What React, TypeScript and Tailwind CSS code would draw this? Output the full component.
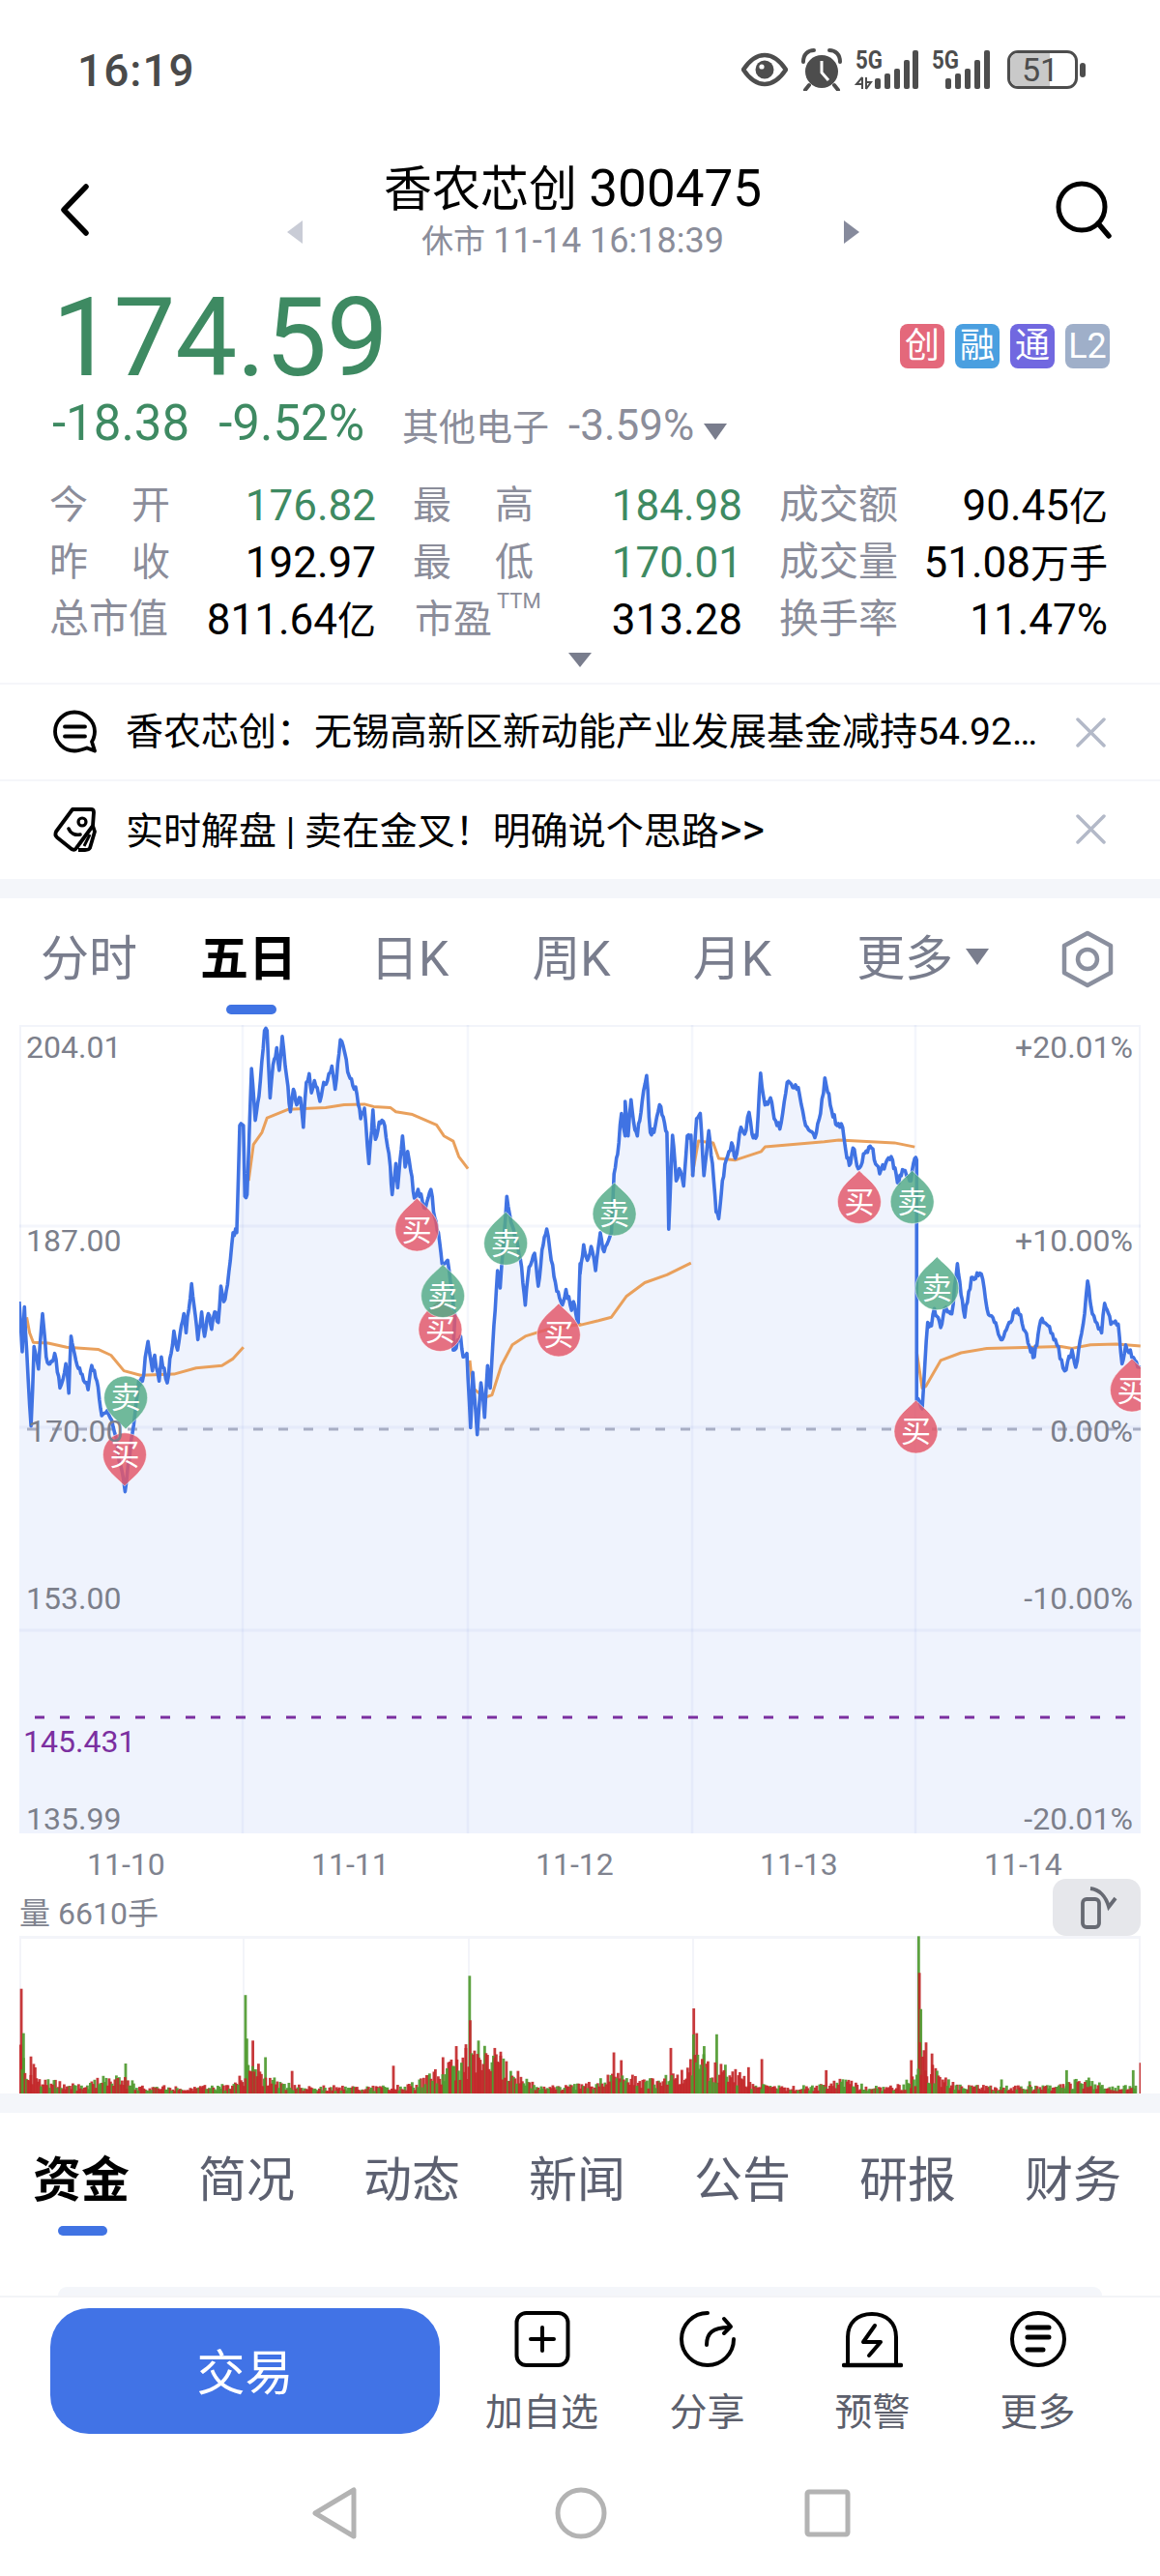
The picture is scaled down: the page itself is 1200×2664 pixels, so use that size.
import React from "react";

const F = { fontFamily: 'Roboto, "Noto Sans CJK SC", sans-serif' } as const;
const ff = "font-['Roboto','Noto_Sans_CJK_SC',sans-serif]";

type P = [number, number];
const z3 = (p: P): P => [p[0] / 2.613, 1040 + p[1] / 2.8];
const z4 = (p: P): P => [600 + p[0] / 2.613, 1040 + p[1] / 2.8];

const blueA: P[] = [[52,860],[60,1005],[66,875],[72,1000],[84,1220],[92,990],[104,1055],[115,895],[125,1020],[135,1040],[148,1010],[162,1110],[178,1040],[186,1125],[192,960],[205,1030],[222,1070],[238,1115],[248,1045],[262,1090],[275,1190],[290,1175],[310,1240],[338,1410],[358,1240],[375,1090],[385,1090],[400,975],[412,1060],[418,1015],[430,1090],[436,1020],[452,1095],[470,945],[480,1000],[497,895],[503,950],[518,808],[535,970],[545,890],[553,960],[563,895],[572,940],[580,890],[590,920],[597,815],[605,860],[615,810],[630,660],[640,660],[648,350],[658,350],[662,555],[668,550],[680,185],[690,335],[700,265],[715,75],[722,75],[730,270],[738,175],[748,125],[755,190],[763,92],[775,210],[785,310],[793,245],[802,290],[812,270],[820,355],[828,225],[836,200],[842,255],[850,220],[865,280],[875,225],[885,220],[897,178],[906,245],[920,102],[932,140],[940,195],[950,215],[965,260],[975,330],[985,300],[997,460],[1008,305],[1015,390],[1025,340],[1040,350],[1055,470],[1060,550],[1070,460],[1075,530],[1088,380],[1095,470],[1102,425],[1110,480],[1120,560],[1130,535],[1150,590],[1165,535],[1172,600],[1185,660],[1195,750],[1210,740],[1230,900],[1225,1000],[1245,960],[1252,1020],[1262,1010],[1272,1225],[1278,1065],[1290,1245],[1300,1095],[1310,1195],[1318,1045],[1325,1110],[1335,930],[1345,770],[1352,820],[1370,555],[1385,640],[1400,700],[1410,760],[1420,870],[1430,760],[1445,720],[1455,815],[1465,710],[1478,650],[1490,740],[1505,830],[1520,870],[1530,825],[1545,885],[1550,860],[1563,920],[1568,750]];
const blueB: P[] = [[0,780],[10,695],[20,740],[30,700],[42,770],[55,660],[65,715],[85,660],[92,490],[105,400],[112,315],[122,380],[122,280],[130,380],[138,275],[145,340],[155,380],[168,280],[180,205],[190,370],[200,370],[215,290],[225,325],[235,370],[240,650],[250,378],[260,510],[268,475],[280,525],[290,380],[300,378],[305,495],[315,330],[325,315],[335,495],[348,365],[358,460],[368,600],[375,620],[385,510],[395,450],[410,400],[420,445],[435,355],[445,375],[457,312],[465,375],[478,380],[488,198],[500,290],[515,270],[525,330],[540,360],[560,225],[575,240],[590,240],[610,350],[635,385],[650,315],[662,212],[680,305],[695,350],[710,355],[718,420],[728,465],[738,415],[752,475],[770,430],[788,415],[810,490],[830,450],[845,450],[858,515],[875,480],[895,510],[905,445],[910,450],[910,1145],[918,1150],[925,1170],[932,1045],[940,920],[950,930],[958,880],[975,935],[985,880],[1005,895],[1020,750],[1030,840],[1040,905],[1058,790],[1085,780],[1100,880],[1120,920],[1138,970],[1160,920],[1183,880],[1215,990],[1228,1020],[1245,915],[1265,930],[1285,970],[1310,1060],[1330,1000],[1340,1050],[1360,925],[1372,800],[1385,895],[1410,950],[1418,865],[1435,925],[1455,925],[1465,1040],[1475,985],[1500,1030],[1515,1050]];

const rnd = (i: number) => {
  const v = Math.sin(i * 12.9898 + 4.1) * 43758.5453;
  return v - Math.floor(v);
};

function jitter(pts: P[]): P[] {
  const out: P[] = [];
  pts.forEach((p, i) => {
    out.push(p);
    const n = pts[i + 1];
    if (!n) return;
    const dx = n[0] - p[0];
    const steps = Math.floor(dx / 1.6);
    for (let k = 1; k <= steps; k++) {
      const t = k / (steps + 1);
      out.push([p[0] + dx * t, p[1] + (n[1] - p[1]) * t + (rnd(i * 31 + k) - 0.5) * 8]);
    }
  });
  return out;
}

const blue: P[] = jitter([...blueA.map(z3), ...blueB.map(z4)]);
const toPath = (pts: P[]) => pts.map((p, i) => `${i ? "L" : "M"}${p[0].toFixed(1)} ${p[1].toFixed(1)}`).join("");
const fillPath = toPath(blue) + "L1180 1897L20 1897Z";

const orange: string[] = [
  toPath([[72,905],[80,950],[90,978],[130,980],[180,992],[265,998],[300,1015],[335,1060],[380,1073],[470,1070],[530,1052],[600,1045],[630,1025],[658,992]].map((p) => z3(p as P))),
  toPath([[672,510],[685,405],[708,370],[722,328],[780,303],[880,298],[930,290],[985,288],[1010,295],[1055,298],[1070,310],[1115,318],[1180,348],[1200,380],[1225,395],[1240,440],[1265,475]].map((p) => z3(p as P))),
  toPath([...[[1270,1030],[1278,1110],[1310,1138],[1330,1130],[1355,1045],[1385,985],[1420,960],[1480,940],[1568,925]].map((p) => z3(p as P)), ...[[0,928],[50,915],[85,905],[125,845],[175,805],[235,782],[300,748]].map((p) => z4(p as P))]),
  toPath([[303,495],[320,395],[360,400],[375,445],[420,450],[490,425],[500,412],[660,397],[700,392],[850,400],[905,412]].map((p) => z4(p as P))),
  toPath([[910,1005],[925,1110],[935,1105],[975,1030],[1030,1008],[1100,995],[1300,990],[1330,995],[1380,985],[1450,983],[1515,988]].map((p) => z4(p as P))),
];

type M = { x: number; y: number; up: boolean; buy: boolean };
const mk = (f: (p: P) => P, zx: number, top: number, up: boolean, buy: boolean): M => {
  const [x, y] = f([zx, top]);
  return { x, y, up, buy };
};
const markers: M[] = [
  mk(z3, 337, 1240, false, true),
  mk(z3, 340, 1075, false, false),
  mk(z3, 1127, 560, true, true),
  mk(z3, 1190, 850, true, true),
  mk(z3, 1197, 752, true, false),
  mk(z3, 1367, 600, true, false),
  mk(z3, 1510, 865, true, true),
  mk(z4, 93, 515, true, false),
  mk(z4, 755, 480, true, true),
  mk(z4, 898, 480, true, false),
  mk(z4, 965, 730, true, false),
  mk(z4, 908, 1145, true, true),
  mk(z4, 1492, 1025, true, true),
];

function Marker({ m }: { m: M }) {
  const h = 55;
  const r = 22.5;
  const c = m.buy ? "#e2586a" : "#55ab88";
  const d = m.up
    ? `M${m.x} ${m.y}C${m.x + 7} ${m.y + 8} ${m.x + r} ${m.y + 17} ${m.x + r} ${m.y + h - r}A${r} ${r} 0 1 1 ${m.x - r} ${m.y + h - r}C${m.x - r} ${m.y + 17} ${m.x - 7} ${m.y + 8} ${m.x} ${m.y}Z`
    : `M${m.x} ${m.y + h}C${m.x + 7} ${m.y + h - 8} ${m.x + r} ${m.y + h - 17} ${m.x + r} ${m.y + r}A${r} ${r} 0 1 0 ${m.x - r} ${m.y + r}C${m.x - r} ${m.y + h - 17} ${m.x - 7} ${m.y + h - 8} ${m.x} ${m.y + h}Z`;
  const ty = m.up ? m.y + h - r + 11 : m.y + r + 11;
  return (
    <g>
      <path d={d} fill={c} fillOpacity={0.84} stroke="#ffffff" strokeOpacity={0.5} strokeWidth={1} />
      <text x={m.x} y={ty} textAnchor="middle" fontSize={31} fill="#ffffff" style={F}>
        {m.buy ? "买" : "卖"}
      </text>
    </g>
  );
}

const spikes: [number, number, boolean][] = [[27,1195,true],[30,1315,false],[40,1378,true],[168,1397,false],[330,1212,false],[340,1335,true],[357,1380,false],[393,1417,true],[530,1403,true],[597,1380,true],[615,1350,true],[633,1160,false],[628,1345,true],[645,1335,false],[667,1355,true],[675,1365,true],[828,1367,true],[838,1388,true],[905,1355,true],[936,1248,true],[940,1315,true],[950,1350,false],[967,1318,false],[1010,1407,true],[1028,1385,true],[1115,1415,true],[1240,1053,false],[1241,1152,true],[1243,1250,false],[1250,1340,true],[1258,1370,true],[1230,1388,true],[1352,1440,false],[1390,1445,false],[1440,1415,false],[1470,1435,false],[1530,1415,false],[1540,1395,true]];

function envelope(x: number) {
  let v = 6;
  for (const d of [20, 253, 484, 716, 949]) {
    if (x >= d) v += 36 * Math.exp(-(x - d) / 16);
    else v += 16 * Math.exp((x - d) / 9);
  }
  const b = (c: number, w: number, a: number) => a * Math.exp(-((x - c) * (x - c)) / (2 * w * w));
  return v + b(115, 14, 10) + b(470, 22, 18) + b(515, 18, 16) + b(640, 22, 9) + b(700, 16, 10) + b(752, 14, 12) + b(870, 12, 5) + b(1120, 12, 6);
}

const volBars: { x: number; h: number; red: boolean }[] = [];
for (let i = 0; i < 770; i++) {
  const x = 20 + i * 1.5;
  const r = rnd(i + 500);
  volBars.push({ x, h: Math.max(2, envelope(x) * (0.4 + 1.05 * r)), red: rnd(i + 900) > 0.42 });
}
spikes.forEach(([z, y, red]) => volBars.push({ x: z / 1.3067, h: (1478 - y) / 2.613, red }));
volBars.sort((a, b) => b.h - a.h);

const vLines = [251, 484, 716, 947];

function Chart() {
  return (
    <div className={`relative w-[1160px] h-[836px] border-2 border-[#f2f4fa] ${ff}`}>
      <svg className="absolute left-[-2px] top-[-2px]" width={1160} height={836} viewBox="20 1061 1160 836">
        <path d={fillPath} fill="#eff3fd" />
        {vLines.map((x) => (
          <line key={x} x1={x} x2={x} y1={1061} y2={1897} stroke="#5f7fd0" strokeOpacity={0.07} strokeWidth={2.5} />
        ))}
        {[1269, 1477, 1687].map((y) => (
          <line key={y} x1={20} x2={1180} y1={y} y2={y} stroke="#5f7fd0" strokeOpacity={0.07} strokeWidth={3} />
        ))}
        <line x1={28} x2={1180} y1={1479} y2={1479} stroke="#a8aec4" strokeWidth={3} strokeDasharray="10 16" />
        <line x1={36} x2={1166} y1={1777} y2={1777} stroke="#7b2fa0" strokeWidth={3} strokeDasharray="10 16" />
        {orange.map((d, i) => (
          <path key={i} d={d} fill="none" stroke="#e9a05c" strokeWidth={3} strokeLinejoin="round" />
        ))}
        <path d={toPath(blue)} fill="none" stroke="#4073e3" strokeWidth={3.6} strokeLinejoin="round" />
        {markers.map((m, i) => (
          <Marker key={i} m={m} />
        ))}
      </svg>
      <Lbl cls="left-[5px] top-[3px]" t="204.01" />
      <Lbl cls="left-[5px] top-[203px]" t="187.00" />
      <Lbl cls="left-[7px] top-[400px]" t="170.00" />
      <Lbl cls="left-[5px] top-[573px]" t="153.00" />
      <span className="absolute left-[2px] top-[721px] text-[32px] leading-[36px] text-[#7b2fa0]">145.431</span>
      <Lbl cls="left-[5px] top-[801px]" t="135.99" />
      <Lbl cls="right-[6px] top-[3px]" t="+20.01%" />
      <Lbl cls="right-[6px] top-[203px]" t="+10.00%" />
      <Lbl cls="right-[6px] top-[400px]" t="0.00%" />
      <Lbl cls="right-[6px] top-[573px]" t="-10.00%" />
      <Lbl cls="right-[6px] top-[801px]" t="-20.01%" />
    </div>
  );
}

function Lbl({ cls, t }: { cls: string; t: string }) {
  return <span className={`absolute ${cls} text-[32px] leading-[36px] text-[#7c7f8b]`}>{t}</span>;
}

function Volume() {
  return (
    <svg className="block" width={1160} height={163} viewBox="20 2003 1160 163">
      <rect x={20} y={2003} width={1160} height={3} fill="#f3f4f9" />
      <rect x={20} y={2003} width={2} height={163} fill="#f3f4f9" />
      <rect x={1178} y={2003} width={2} height={163} fill="#f3f4f9" />
      {vLines.map((x) => (
        <rect key={x} x={x} y={2003} width={2} height={163} fill="#f3f4f9" />
      ))}
      {volBars.map((b, i) => (
        <rect key={i} x={b.x} y={2166 - b.h} width={2.8} height={b.h} fill={b.red ? "#c2282a" : "#4f9a30"} fillOpacity={0.92} />
      ))}
    </svg>
  );
}

function Label2({ a, b }: { a: string; b: string }) {
  return (
    <span className="-ml-[3px] w-[125px] flex justify-between text-[#8b8d9a]">
      <span>{a}</span>
      <span>{b}</span>
    </span>
  );
}

function Label3({ t }: { t: string }) {
  return <span className="-ml-[3px] text-[41px] text-[#8b8d9a]">{t}</span>;
}

function StatCell({ children, value, unit, color }: { children: React.ReactNode; value: string; unit?: string; color: string }) {
  return (
    <div className="flex items-center justify-between h-[59px]">
      {children}
      <span className={`${color} whitespace-nowrap`}>
        <span className="text-[44px]">{value}</span>
        {unit}
      </span>
    </div>
  );
}

function Tag({ t, c }: { t: string; c: string }) {
  return (
    <span className={`w-[46px] h-[46px] rounded-[8px] flex items-center justify-center text-white text-[36px] leading-none ${c}`}>{t}</span>
  );
}

function Close() {
  return (
    <svg width={33} height={31} viewBox="0 0 33 31" className="shrink-0">
      <path d="M3 2L30 29M30 2L3 29" stroke="#b3b9c8" strokeWidth={3.5} strokeLinecap="round" />
    </svg>
  );
}

function StatusIcons() {
  return (
    <div className="flex items-center">
      <svg width={48} height={42} viewBox="0 0 48 42">
        <path d="M2 21C10 9 17 6 24 6S38 9 46 21C38 33 31 36 24 36S10 33 2 21Z" fill="none" stroke="#4d4d4d" strokeWidth={4.5} strokeLinejoin="round" />
        <circle cx={24} cy={21} r={9.5} fill="#4d4d4d" />
        <circle cx={21} cy={18} r={2.6} fill="#ffffff" />
      </svg>
      <svg width={42} height={44} viewBox="0 0 42 44" className="ml-[14px]">
        <circle cx={21} cy={24} r={17} fill="#4d4d4d" />
        <path d="M21 13V25L28 33" fill="none" stroke="#ffffff" strokeWidth={3} />
        <path d="M2 14C2 6 7 2 13 2M40 14C40 6 35 2 29 2" fill="none" stroke="#4d4d4d" strokeWidth={4} strokeLinecap="round" />
        <path d="M8 38L4 43M34 38L38 43" stroke="#4d4d4d" strokeWidth={4} strokeLinecap="round" />
      </svg>
      <svg width={142} height={42} viewBox="885 52 142 42" className="ml-[14px] overflow-visible">
        <text x={885} y={72} fontSize={26} fontWeight={700} fill="#4d4d4d" textLength={28} lengthAdjust="spacingAndGlyphs" style={F}>5G</text>
        <path d="M892 81V93M892 81L886 88H892M896 93V81M896 93L901 86H896" fill="none" stroke="#4d4d4d" strokeWidth={2} />
        {[[905,82],[915,77],[925,72],[935,63],[944,53]].map(([x, y]) => (
          <rect key={x} x={x} y={y} width={6} height={93 - y} rx={2} fill="#4d4d4d" />
        ))}
        <text x={964} y={72} fontSize={26} fontWeight={700} fill="#4d4d4d" textLength={28} lengthAdjust="spacingAndGlyphs" style={F}>5G</text>
        {[[978,82],[988,77],[998,72],[1008,63],[1018,53]].map(([x, y]) => (
          <rect key={x} x={x} y={y} width={6} height={93 - y} rx={2} fill="#4d4d4d" />
        ))}
      </svg>
      <div className="ml-[15px] relative w-[73px] h-[40px] rounded-[11px] border-[3px] border-[#4d4d4d] overflow-hidden flex items-center justify-center">
        <div className="absolute left-0 top-0 bottom-0 w-[41px] bg-[#c9c9c9]" />
        <span className="relative text-[34px] leading-none text-[#4d4d4d] -ml-[5px]">51</span>
      </div>
      <div className="ml-[2px] w-[6px] h-[15px] rounded-[3px] bg-[#4d4d4d]" />
    </div>
  );
}

function Act({ t, icon }: { t: string; icon: React.ReactNode }) {
  return (
    <div className="w-[171px] flex flex-col items-center">
      <div className="mt-[1px] h-[62px] flex items-center justify-center">{icon}</div>
      <span className="mt-[23px] text-[39px] leading-[44px] text-[#5c5f6c]">{t}</span>
    </div>
  );
}

export default function App() {
  return (
    <div className={`w-[1200px] h-[2664px] bg-white overflow-hidden ${ff}`}>
      <div className="h-[144px] flex items-center justify-between pl-[80px] pr-[77px]">
        <span className="pt-[2px] text-[46px] leading-none font-medium tracking-[1px] text-[#4a4a4a]">16:19</span>
        <StatusIcons />
      </div>

      <div className="h-[146px] flex items-start justify-between pl-[62px] pr-[49px]">
        <svg width={30} height={54} viewBox="0 0 30 54" className="mt-[46px]">
          <path d="M27 3L4 27L27 51" fill="none" stroke="#000" strokeWidth={5.5} strokeLinecap="round" strokeLinejoin="round" />
        </svg>
        <div className="flex items-center ml-[2px]">
          <svg width={16} height={24} viewBox="0 0 16 24" className="mt-[66px]"><path d="M16 0V24L0 12Z" fill="#c9ccd6" /></svg>
          <div className="w-[560px] flex flex-col items-center">
            <span className="mt-[24px] text-[50px] leading-[54px] text-black whitespace-nowrap">香农芯创 <span className="text-[53px]">300475</span></span>
            <span className="mt-[7px] text-[33px] leading-[38px] text-[#8b8d9a] whitespace-nowrap">休市 <span className="text-[36px]">11-14 16:18:39</span></span>
          </div>
          <svg width={16} height={24} viewBox="0 0 16 24" className="mt-[66px]"><path d="M0 0V24L16 12Z" fill="#868a9c" /></svg>
        </div>
        <svg width={60} height={60} viewBox="0 0 60 60" className="mt-[43px]">
          <circle cx={28} cy={27} r={24} fill="none" stroke="#000" strokeWidth={5} />
          <path d="M45 44L56 57" stroke="#000" strokeWidth={5.5} strokeLinecap="round" />
        </svg>
      </div>

      <div className="h-[203px] flex items-start justify-between pl-[54px] pr-[52px]">
        <div className="flex flex-col">
          <span className="mt-[3px] text-[114px] leading-[112px] text-[#3e8a62] tracking-[-0.5px]">174.59</span>
          <div className="mt-[8px] flex items-baseline leading-[50px] whitespace-nowrap">
            <span className="text-[51px] text-[#3e8a62]">-18.38</span>
            <span className="ml-[30px] text-[51px] text-[#3e8a62]">-9.52%</span>
            <span className="ml-[39px] text-[38px] text-[#8b8d9a]">其他电子</span>
            <span className="ml-[20px] text-[44px] text-[#8b8d9a]">-3.59%</span>
            <svg width={24} height={17} viewBox="0 0 24 17" className="ml-[10px]"><path d="M0 0H24L12 17Z" fill="#797d8d" /></svg>
          </div>
        </div>
        <div className="mt-[45px] flex gap-[11px]">
          <Tag t="创" c="bg-[#e4687b]" />
          <Tag t="融" c="bg-[#4a9fe0]" />
          <Tag t="通" c="bg-[#7168e0]" />
          <Tag t="L2" c="bg-[#9fafc9]" />
        </div>
      </div>

      <div className="grid grid-cols-[335px_338px_337px] gap-x-[41px] pl-[54px] text-[40px] leading-none">
        <StatCell value="176.82" color="text-[#3e8a62]"><Label2 a="今" b="开" /></StatCell>
        <StatCell value="184.98" color="text-[#3e8a62]"><Label2 a="最" b="高" /></StatCell>
        <StatCell value="90.45" unit="亿" color="text-black"><Label3 t="成交额" /></StatCell>
        <StatCell value="192.97" color="text-black"><Label2 a="昨" b="收" /></StatCell>
        <StatCell value="170.01" color="text-[#3e8a62]"><Label2 a="最" b="低" /></StatCell>
        <StatCell value="51.08" unit="万手" color="text-black"><Label3 t="成交量" /></StatCell>
        <StatCell value="811.64" unit="亿" color="text-black"><Label3 t="总市值" /></StatCell>
        <StatCell value="313.28" color="text-black">
          <span className="-ml-[1px] flex items-start text-[#8b8d9a]">市盈<span className="ml-[5px] -mt-[10px] text-[22px]">TTM</span></span>
        </StatCell>
        <StatCell value="11.47%" color="text-black"><Label3 t="换手率" /></StatCell>
      </div>

      <div className="h-[36px] flex justify-center pt-[5px]">
        <svg width={24} height={15} viewBox="0 0 24 15"><path d="M0 0H24L12 15Z" fill="#797d8d" /></svg>
      </div>

      <div className="h-[102px] border-t-2 border-b-2 border-[#f5f6fa] flex items-center pl-[54px] pr-[55px]">
        <svg width={48} height={46} viewBox="0 0 48 46" className="shrink-0">
          <path d="M23 2.5C12 2.5 3 11.5 3 22.5S12 42.500 23 42.500C28 42.500 32 41 36 39.500L44 42.500L41 33C43 30 44 27 44 22.500C44 11.500 34 2.500 23 2.500Z" fill="none" stroke="#000" strokeWidth={3.8} strokeLinejoin="round" />
          <path d="M13 17.500H34M13 27.500H34" stroke="#000" strokeWidth={3.8} strokeLinecap="round" />
        </svg>
        <span className="ml-[28px] flex-1 min-w-0 text-[39px] leading-none text-black whitespace-nowrap">香农芯创：无锡高新区新动能产业发展基金减持54.92…</span>
        <Close />
      </div>

      <div className="h-[101px] flex items-center pl-[54px] pr-[55px] pb-[2px]">
        <svg width={48} height={50} viewBox="0 0 48 50" className="shrink-0">
          <path d="M21 4L40 4C42 4 43 5 43 7L42 21L25 44C24 46 22 46 20 45L5 33C3 31 3 29 4 27Z" fill="none" stroke="#000" strokeWidth={3.8} strokeLinejoin="round" />
          <circle cx={31} cy={17} r={4} fill="none" stroke="#000" strokeWidth={3.2} />
          <path d="M17 24C19 29 24 31 29 30" fill="none" stroke="#000" strokeWidth={3.6} strokeLinecap="round" />
          <path d="M42 21L44 27L39 44C38 46 36 46 34 46H27" fill="none" stroke="#000" strokeWidth={3.8} strokeLinejoin="round" />
          <path d="M39 30L33 42" fill="none" stroke="#000" strokeWidth={3} />
        </svg>
        <span className="ml-[28px] flex-1 text-[39px] leading-none text-black whitespace-nowrap">实时解盘 | 卖在金叉！明确说个思路<span className="text-[45px]">&gt;&gt;</span></span>
        <Close />
      </div>

      <div className="h-[20px] bg-[#f4f6fa]" />

      <div className="relative h-[131px] flex items-center text-[50px] leading-none text-[#797d8d] whitespace-nowrap pb-[5px]">
        <span className="ml-[42px]">分时</span>
        <span className="ml-[65px] font-bold text-black">五日</span>
        <span className="ml-[76px]">日K</span>
        <span className="ml-[86px]">周K</span>
        <span className="ml-[85px]">月K</span>
        <span className="ml-[88px]">更多</span>
        <svg width={24} height={17} viewBox="0 0 24 17" className="ml-[13px] -mt-[6px]"><path d="M0 0H24L12 17Z" fill="#797d8d" /></svg>
        <svg width={56} height={60} viewBox="0 0 56 60" className="ml-[74px]">
          <path d="M28 3L52 16V44L28 57L4 44V16Z" fill="none" stroke="#8a8f9e" strokeWidth={4.5} strokeLinejoin="round" />
          <circle cx={28} cy={30} r={10} fill="none" stroke="#8a8f9e" strokeWidth={4.5} />
        </svg>
        <div className="absolute left-[234px] bottom-[11px] w-[52px] h-[10px] rounded-[5px] bg-[#4073e3]" />
      </div>

      <div className="pl-[20px]">
        <Chart />
      </div>

      <div className="relative h-[106px] pl-[20px] text-[#80838f]">
        <div className="flex pt-[17px] text-[32px] leading-[30px]">
          <span className="w-[232px] pl-[70px]">11-10</span>
          <span className="w-[232px] pl-[70px]">11-11</span>
          <span className="w-[232px] pl-[70px]">11-12</span>
          <span className="w-[232px] pl-[70px]">11-13</span>
          <span className="w-[232px] pl-[70px]">11-14</span>
        </div>
        <div className="mt-[18px] text-[32px] leading-[36px]">量 6610手</div>
        <div className="absolute right-[20px] top-[47px] w-[91px] h-[59px] rounded-[14px] bg-[#e6e7eb] flex items-center justify-center">
          <svg width={44} height={50} viewBox="0 0 44 50">
            <rect x={7} y={16} width={17} height={29} rx={4} fill="none" stroke="#676a73" strokeWidth={3.8} />
            <path d="M15 5C24 6 31 13 34 24L41 15" fill="none" stroke="#676a73" strokeWidth={3.8} />
          </svg>
        </div>
      </div>

      <div className="pl-[20px]">
        <Volume />
      </div>

      <div className="h-[20px] bg-[#f4f6fa]" />

      <div className="relative h-[189px] pl-[34px] flex pt-[45px] text-[50px] leading-[50px] text-[#5c6070] whitespace-nowrap">
        <span className="w-[171px] font-bold text-black">资金</span>
        <span className="w-[171px]">简况</span>
        <span className="w-[171px]">动态</span>
        <span className="w-[171px]">新闻</span>
        <span className="w-[171px]">公告</span>
        <span className="w-[171px]">研报</span>
        <span className="w-[100px]">财务</span>
        <div className="absolute left-[60px] top-[117px] w-[51px] h-[10px] rounded-[5px] bg-[#4073e3]" />
        <div className="absolute left-[60px] right-[60px] bottom-0 h-[9px] rounded-t-[18px] bg-[#f4f6fa]" />
      </div>

      <div className="h-[165px] border-t-2 border-[#f3f4f7] flex items-start pl-[52px] pt-[11px]">
        <div className="w-[403px] h-[130px] rounded-[40px] bg-[#4173e6] flex items-center justify-center pt-[5px] text-[50px] leading-none text-white">交易</div>
        <div className="ml-[20px] flex">
          <Act t="加自选" icon={
            <svg width={58} height={60} viewBox="0 0 58 60">
              <rect x={2.5} y={3} width={53} height={54} rx={10} fill="none" stroke="#000" strokeWidth={4} />
              <path d="M29 18V42M17 30H41" stroke="#000" strokeWidth={4} strokeLinecap="round" />
            </svg>
          } />
          <Act t="分享" icon={
            <svg width={60} height={60} viewBox="0 0 60 60">
              <path d="M30 3A27 27 0 1 0 57 30" fill="none" stroke="#000" strokeWidth={4} strokeLinecap="round" />
              <path d="M29 36C29 24 35 18 52 18" fill="none" stroke="#000" strokeWidth={4} strokeLinecap="round" />
              <path d="M47 9L54 17L47 24" fill="none" stroke="#000" strokeWidth={4} strokeLinecap="round" strokeLinejoin="round" />
            </svg>
          } />
          <Act t="预警" icon={
            <svg width={63} height={60} viewBox="0 0 63 60">
              <path d="M6 57V28C6 13 16 4 31 4S56 13 56 28V57" fill="none" stroke="#000" strokeWidth={4} />
              <path d="M2 57H61" stroke="#000" strokeWidth={4.5} strokeLinecap="round" />
              <path d="M34 16L22 33H40L28 47" fill="none" stroke="#000" strokeWidth={4} strokeLinecap="round" strokeLinejoin="round" />
            </svg>
          } />
          <Act t="更多" icon={
            <svg width={60} height={60} viewBox="0 0 60 60">
              <circle cx={30} cy={30} r={27} fill="none" stroke="#000" strokeWidth={4} />
              <path d="M19 18H41M19 28H41M19 41H35" stroke="#000" strokeWidth={5} strokeLinecap="round" />
            </svg>
          } />
        </div>
      </div>

      <div className="h-[124px] flex items-start pt-[33px] pl-[323px]">
        <svg width={46} height={54} viewBox="0 0 46 54">
          <path d="M43 3V51L3 27Z" fill="none" stroke="#b3b3b3" strokeWidth={5} strokeLinejoin="round" />
        </svg>
        <svg width={54} height={54} viewBox="0 0 54 54" className="ml-[205px]">
          <circle cx={27} cy={27} r={24} fill="none" stroke="#b3b3b3" strokeWidth={5} />
        </svg>
        <svg width={48} height={50} viewBox="0 0 48 50" className="ml-[204px] mt-[2px]">
          <rect x={3} y={3} width={42} height={44} rx={2} fill="none" stroke="#b3b3b3" strokeWidth={5} />
        </svg>
      </div>
    </div>
  );
}
